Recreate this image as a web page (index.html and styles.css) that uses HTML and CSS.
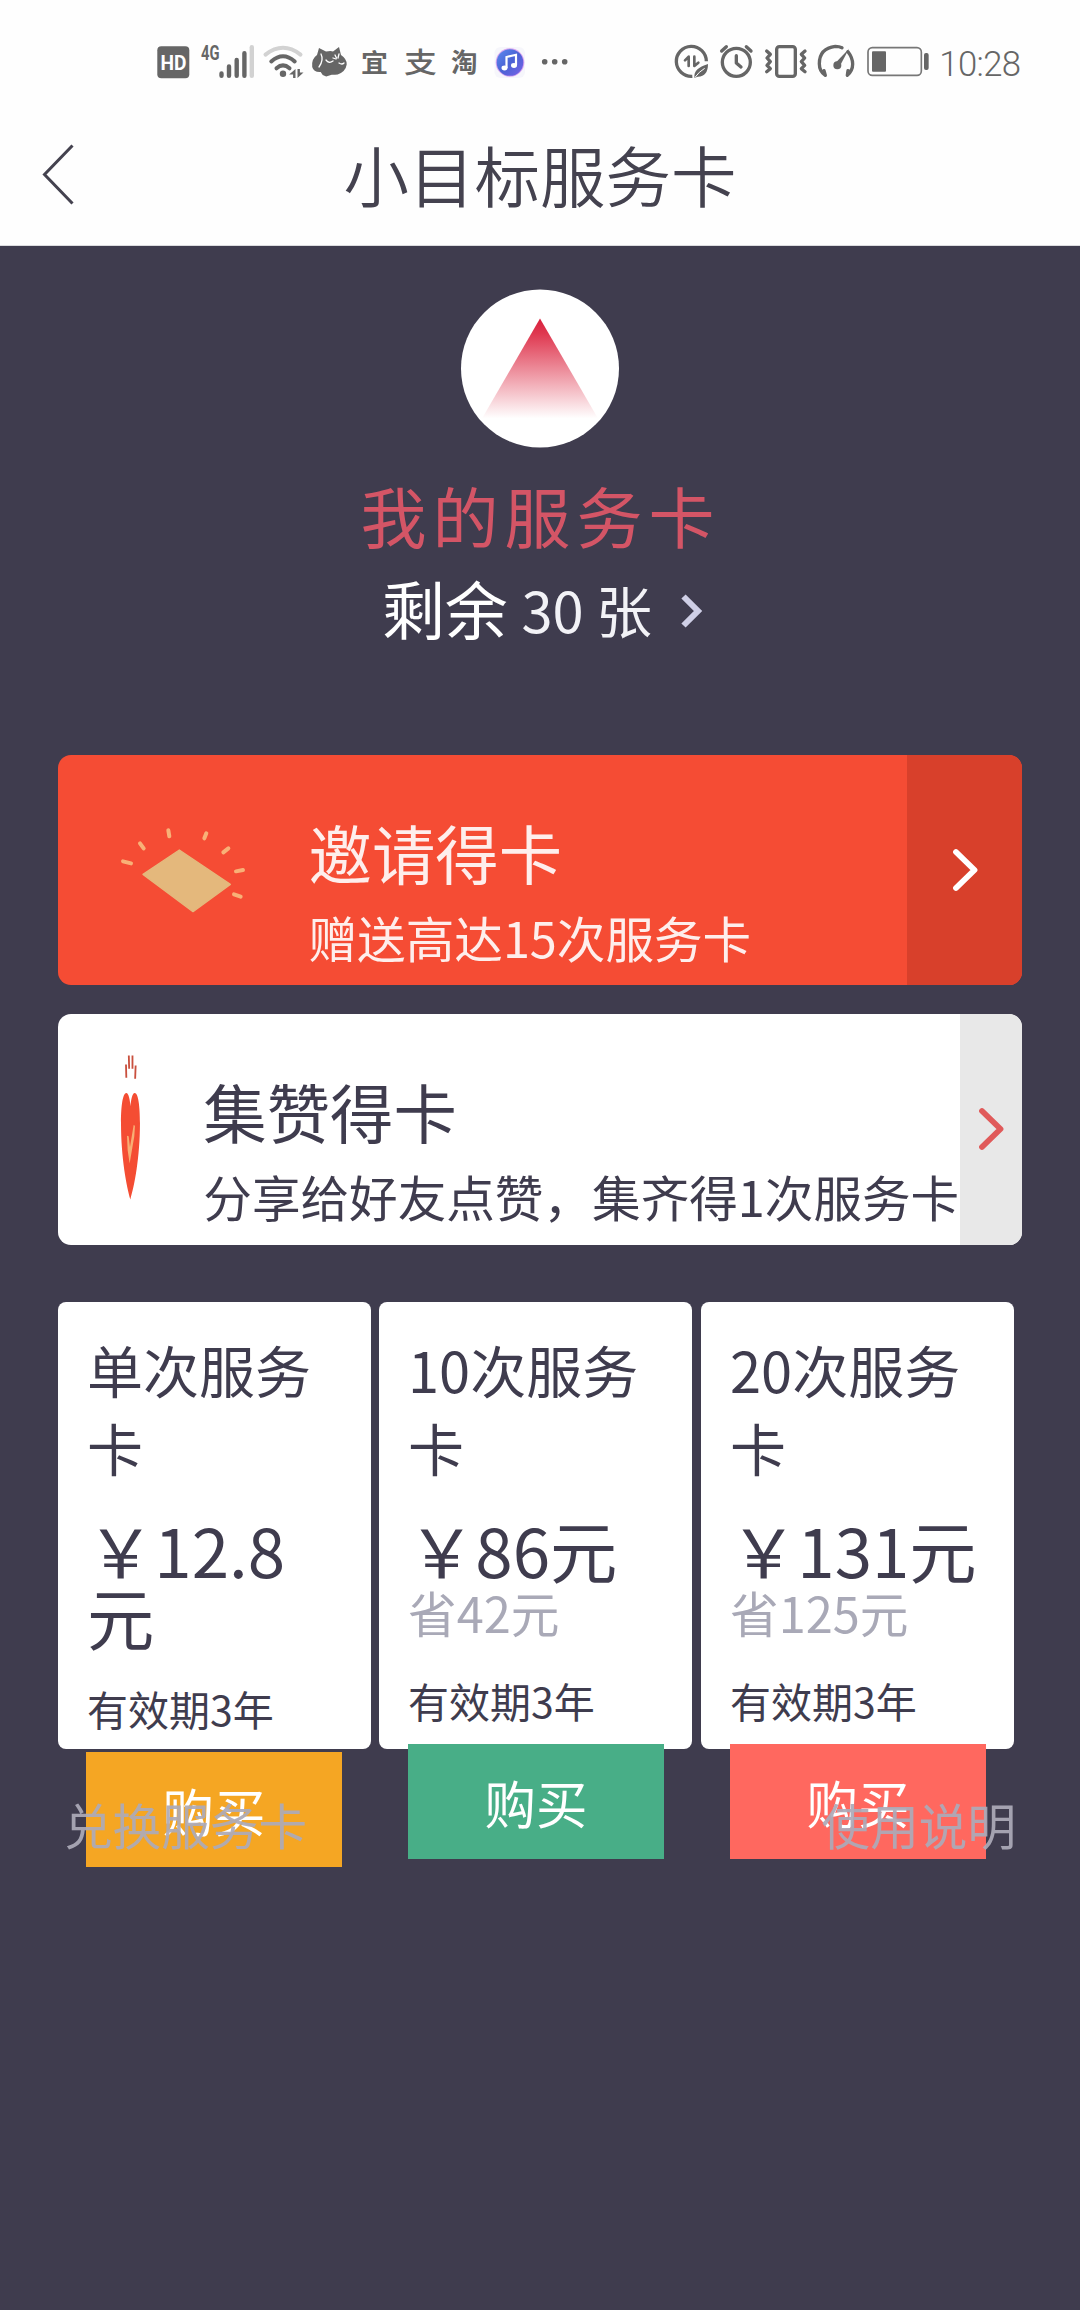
FILE: index.html
```html
<!DOCTYPE html>
<html lang="zh-CN">
<head>
<meta charset="utf-8">
<title>小目标服务卡</title>
<link rel="stylesheet" href="styles.css">
</head>
<body>
<header class="top">
  <div class="status">
    <svg class="status-left" width="440" height="65" viewBox="0 0 440 65">
      <rect x="17.3" y="16.3" width="32" height="32" rx="4" fill="#666"/>
      <text x="20.5" y="40" class="st-hd" textLength="26" lengthAdjust="spacingAndGlyphs">HD</text>
      <text x="61" y="30" class="st-4g" textLength="18.5" lengthAdjust="spacingAndGlyphs">4G</text>
      <g stroke="#666" stroke-width="4.4" stroke-linecap="round">
        <path d="M81.5 43.5v2.2M89 36.5v9.2M96.7 30v15.7M104.4 23.3v22.4"/>
        <path stroke="#d2d2d2" d="M111.8 17.3v28.4"/>
      </g>
      <g fill="none" stroke="#666" stroke-width="4" stroke-linecap="round">
        <path stroke="#d2d2d2" d="M125.5 24.6Q143 11 160.5 24.6"/>
        <path d="M131.3 31.5Q143 21 154.7 31.5"/>
        <path d="M136.5 38.3Q143 32.5 149.5 38.3"/>
      </g>
      <circle cx="143" cy="43.8" r="3.2" fill="#666"/>
      <path fill="#666" d="M155.5 39v9h-2.4v-3.6h-4zM157.5 48v-9h2.4v3.6h3.6z"/>
      <path fill="#666" d="M179 18l7 3.5q5-1 7 0l6-4.5 2 8q6 4 5.700 9.500-1 7-9 10-4 .5-6 .3l-5.500 1.600-3.500-1.500-2-3q-7 .5-8.500-5-1-8 4.800-12z"/>
      <path fill="none" stroke="#fff" stroke-width="1.300" stroke-linecap="round" d="M181 24q3 6-2 13M186 30q3 4 7 1M199 33q3 2 5 0M195 25l1.500 3M199 24l-1 4M193 28l3 1"/>
      <text x="221" y="42" class="st-cjk" font-size="25" textLength="27" lengthAdjust="spacingAndGlyphs">宜</text>
      <text x="264" y="42.500" class="st-cjk st-thin" font-size="28" textLength="33" lengthAdjust="spacingAndGlyphs">支</text>
      <text x="311" y="42" class="st-cjk" font-size="26.500">淘</text>
      <defs><linearGradient id="music" x1="0" y1="0" x2="1" y2="1"><stop offset="0" stop-color="#5c8cf0"/><stop offset=".5" stop-color="#4a62d4"/><stop offset="1" stop-color="#7a63e8"/></linearGradient></defs>
      <rect x="354.500" y="17" width="30.500" height="31" rx="6" fill="#f6f6fb"/>
      <circle cx="370" cy="32.500" r="14.300" fill="#d9a5f0"/>
      <circle cx="370" cy="32.500" r="13.300" fill="url(#music)"/>
      <path fill="none" stroke="#fff" stroke-width="2.200" d="M366.500 38V27l9.500-2.200V35"/>
      <ellipse cx="364.500" cy="38" rx="3" ry="2.400" fill="#fff"/><ellipse cx="374" cy="35.500" rx="3" ry="2.400" fill="#fff"/>
      <g fill="#666"><circle cx="404.700" cy="31.700" r="2.800"/><circle cx="414.700" cy="31.700" r="2.800"/><circle cx="424.700" cy="31.700" r="2.800"/></g>
    </svg>
    <svg class="status-right" width="380" height="65" viewBox="0 0 1140 195">
      <g fill="none" stroke="#666" stroke-width="10" stroke-linecap="round" stroke-linejoin="round">
        <path d="M97 139A45 45 0 1 1 139 94" stroke-linecap="butt"/>
        <path d="M86 108V80L75 91M103 80v28l12-10" stroke-width="8"/>
        <circle cx="229" cy="97" r="42"/>
        <path d="M229 77v22l14 12M185 63l14-13M273 63l-14-13"/>
        <rect x="350" y="50" width="56" height="89" rx="8" stroke-width="10"/>
        <path d="M320 63l11 10-10 11 10 11-10 11 10 10-11 9M435 63l-11 10 10 11-10 11 10 11-10 10 11 9"/>
        <path d="M496 136q-18-12-18-35 0-46 48-52 12 0 20 4M564 65q14 18 14 37 0 20-16 34M496 136l-4-14M562 136l2-14"/>
        <circle cx="532" cy="106" r="7" fill="#666"/>
      </g>
      <path fill="#666" d="M103 143q-3-28 41-41 0 37-30 38z"/>
      <path d="M106 141q10-15 28-26" fill="none" stroke="#fff" stroke-width="3"/>
      <path fill="#666" d="M524 101l43-45-29 55z"/>
      <rect x="624" y="53" width="160" height="83" rx="13" fill="none" stroke="#777" stroke-width="5"/>
      <rect x="636" y="64" width="42" height="61" rx="3" fill="#666"/>
      <rect x="792" y="69" width="14" height="51" rx="6" fill="#666"/>
      <text x="838" y="138" class="st-time" textLength="245" lengthAdjust="spacing">10:28</text>
    </svg>
  </div>
  <div class="nav">
    <svg class="back" width="36" height="64" viewBox="0 0 36 64"><path d="M33.500 3.500L5.500 32.500 33.500 61.500" fill="none" stroke="#44424f" stroke-width="3"/></svg>
    <h1 class="nav-title">小目标服务卡</h1>
  </div>
</header>
<main class="page">
  <section class="hero">
    <svg class="avatar" width="158" height="159" viewBox="0 0 158 158">
      <defs><linearGradient id="peak" x1="0" y1="0" x2="0" y2="1"><stop offset="0" stop-color="#d9203c"/><stop offset=".15" stop-color="#df3850"/><stop offset="1" stop-color="#fff"/></linearGradient></defs>
      <circle cx="79" cy="79" r="79" fill="#fff"/>
      <path d="M79 29L137 129H21z" fill="url(#peak)"/>
    </svg>
    <div class="hero-title">我的服务卡</div>
    <div class="hero-left"><span class="left-label">剩余</span><span class="left-count">&nbsp;30 张</span>
      <svg class="left-arrow" width="22" height="34" viewBox="0 0 22 34"><path d="M2.500 2.500L17 17 2.500 31.500" fill="none" stroke="#cfcfe6" stroke-width="6"/></svg>
    </div>
  </section>

  <section class="promo invite">
    <svg class="promo-icon" width="126" height="86.700" viewBox="240 260 378 260">
      <path d="M309 402L418 329 571 432 459 514z" fill="#e4b87c" stroke="#e4b87c" stroke-width="4" stroke-linejoin="round"/>
      <path d="M249 363l24 6M300 309l11 15M385 270l3 18M499 279l-6 15M565 324l-15 12M588 393l21-4M582 462l20 7" fill="none" stroke="#f8b177" stroke-width="12" stroke-linecap="round"/>
    </svg>
    <div class="promo-text"><div class="promo-title">邀请得卡</div><div class="promo-sub">赠送高达15次服务卡</div></div>
    <div class="promo-go"><svg width="28" height="44" viewBox="0 0 28 44"><path d="M5 4L23.500 22 5 40" fill="none" stroke="#fff" stroke-width="5.800" stroke-linecap="round" stroke-linejoin="round"/></svg></div>
  </section>

  <section class="promo praise">
    <svg class="promo-icon" width="21.300" height="147.300" viewBox="240 160 64 442">
      <path d="M271 600C260 560 243 475 243 370 243 315 249 280 259 280 266 280 270 300 271.500 320 273 300 277 280 284 280 295 280 300 320 300 370 300 475 283 560 271 600z" fill="#f44d33"/>
      <path d="M261 408l5 2 4 32 11-66 4 2-2 32-14 82-6-40z" fill="#f8ae74"/>
      <path d="M258 194l1 40M266.500 167l1 40M277.500 167v40M287 197l-1.500 40" fill="none" stroke="#c9503e" stroke-width="5.500"/>
    </svg>
    <div class="promo-text"><div class="promo-title">集赞得卡</div><div class="promo-sub">分享给好友点赞，集齐得1次服务卡</div></div>
    <div class="promo-go"><svg width="28" height="44" viewBox="0 0 28 44"><path d="M5 4L23.500 22 5 40" fill="none" stroke="#e05a5a" stroke-width="5.800" stroke-linecap="round" stroke-linejoin="round"/></svg></div>
  </section>

  <section class="plans">
    <article class="plan">
      <div class="plan-name">单次服务卡</div>
      <div class="plan-price">￥12.8元</div>
      <div class="plan-term">有效期3年</div>
      <div class="buy orange">购买</div>
    </article>
    <article class="plan">
      <div class="plan-name">10次服务卡</div>
      <div class="plan-price">￥86元</div>
      <div class="plan-save">省42元</div>
      <div class="plan-term">有效期3年</div>
      <div class="buy green">购买</div>
    </article>
    <article class="plan">
      <div class="plan-name">20次服务卡</div>
      <div class="plan-price">￥131元</div>
      <div class="plan-save">省125元</div>
      <div class="plan-term">有效期3年</div>
      <div class="buy coral">购买</div>
    </article>
  </section>

  <footer class="links"><span>兑换服务卡</span><span>使用说明</span></footer>
</main>
</body>
</html>
```
FILE: styles.css
```css
* { box-sizing: border-box; }
body {
  margin: 0;
  width: 1080px;
  min-height: 2310px;
  background: #3f3c4e;
  color: #3f3c4e;
  font-family: "Noto Sans CJK SC", sans-serif;
}
.top { height: 246px; background: #fefefe; border-bottom: 1px solid #dcdcdf; }
.status { display: flex; justify-content: space-between; padding: 30px 40px 0 140px; height: 101px; }
.st-hd { font: bold 21px "Roboto", sans-serif; fill: #fff; }
.st-4g { font: bold 21px "Roboto", sans-serif; fill: #666; }
.st-cjk { font-family: "Noto Sans CJK SC", sans-serif; font-weight: 700; fill: #666; }
.st-thin { font-weight: 500; }
.st-time { font: 300 104px "Roboto", sans-serif; fill: #666; }
.nav { display: grid; grid-template-columns: 150px 1fr 150px; height: 145px; align-items: center; }
.back { margin-left: 39px; }
.nav-title { margin: 0; text-align: center; font-size: 65.500px; font-weight: 350; line-height: 90px; color: #44424f; }

.page { padding: 43px 58px 0; }
.hero { display: flex; flex-direction: column; align-items: center; height: 466px; }
.avatar { display: block; }
.hero-title { margin-top: 20px; padding-left: 1px; font-size: 66px; letter-spacing: 6px; line-height: 92px; color: #d45566; }
.hero-left { display: flex; align-items: baseline; margin-top: 3px; padding-left: 5px; line-height: 88px; white-space: nowrap; }
.left-label { font-size: 63px; color: #fff; }
.left-count { padding-left: 1px; font-size: 56px; color: #f2f2f6; transform: translateY(-1px); }
.left-arrow { margin: 5px 0 0 29px; align-self: center; }

.promo { display: flex; align-items: flex-start; height: 230px; border-radius: 13px; overflow: hidden; padding-left: 62px; }
.promo-icon { flex: none; }
.promo-text { flex: 1; padding-top: 52px; white-space: nowrap; }
.promo-title { font-size: 63.400px; line-height: 88px; }
.promo-sub { margin-top: 8px; font-size: 48.600px; line-height: 68px; }
.promo-go { flex: none; align-self: stretch; display: flex; align-items: center; justify-content: center; }
.invite { background: #f54c34; color: #feeeec; }
.invite .promo-icon { margin: 71.700px 62.500px 0 0; }
.invite .promo-go { width: 115px; background: #d8402b; }
.praise { margin-top: 29px; height: 231px; background: #fff; }
.praise .promo-icon { margin: 39.300px 62px 0 0; }
.praise .promo-go { width: 62px; padding-bottom: 2px; background: #e8e8e8; }

.plans { display: flex; gap: 8px; margin-top: 57px; }
.plan { width: 313px; height: 447px; flex: none; padding: 28.400px 28px 0 29px; border-radius: 8px; background: #fff; }
.plan:last-child { margin-left: 1px; }
.plan-name { font-size: 56px; line-height: 78px; }
.plan-price { margin-top: 28.500px; font-size: 67.300px; line-height: 67.500px; }
.plan-save { font-size: 48.700px; line-height: 60px; color: #a9a9b7; }
.plan-term { margin-top: 30px; font-size: 41px; line-height: 57.500px; }
.buy { margin-top: 14.600px; height: 115px; line-height: 115px; text-align: center; font-size: 51.500px; color: #fff; }
.plan:first-child .buy { margin-left: -1px; margin-right: 1px; }
.orange { background: #f5a623; }
.green { background: #48ae87; }
.coral { background: #ff685f; }

.links { display: flex; justify-content: space-between; margin-top: 41px; padding: 0 6px; font-size: 48.600px; line-height: 68px; color: rgba(172, 170, 184, .93); }
```
